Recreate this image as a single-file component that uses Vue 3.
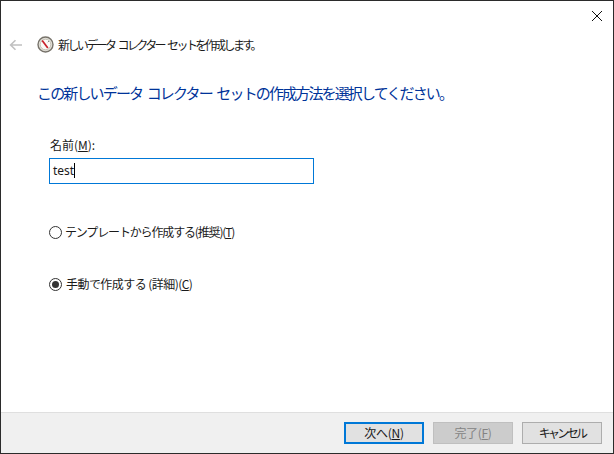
<script setup>
</script>

<template>
  <div class="win">
    <div class="titlebar">
      <svg class="close" width="12" height="12" viewBox="0 0 12 12"><path d="M1 1L11 11M11 1L1 11" stroke="#111" stroke-width="1" fill="none"/></svg>
    </div>
    <div class="nav">
      <svg class="back" width="14" height="12" viewBox="0 0 14 12"><path d="M13 6H2M6.5 1.2L1.6 6l4.9 4.8" stroke="#c0c0c0" stroke-width="1.6" fill="none"/></svg>
      <svg class="gauge" width="17" height="17" viewBox="0 0 17 17">
        <circle cx="8.5" cy="8.5" r="7.5" fill="#e4e1d9" stroke="#77736b" stroke-width="1.4"/>
        <circle cx="8.5" cy="8.5" r="5.3" fill="#fbfaf7" stroke="#b9b5aa" stroke-width="0.8"/>
        <path d="M5.2 4.4L10.8 12" stroke="#c8202a" stroke-width="1.7"/>
        <path d="M12 5l-1.2 1.2" stroke="#8a8a8a" stroke-width="1"/>
      </svg>
      <span class="navtext">新しいデータ コレクター セットを作成します。</span>
    </div>
    <h1 class="heading">この新しいデータ コレクター セットの作成方法を選択してください。</h1>
    <div class="content">
      <label class="namelabel">名前(<u>M</u>):</label>
      <div class="input"><span>test</span><i class="caret"></i></div>
      <div class="radio first"><span class="dot"></span><span>テンプレートから作成する(推奨)(<u>T</u>)</span></div>
      <div class="radio second"><span class="dot on"></span><span>手動で作成する (詳細)(<u>C</u>)</span></div>
    </div>
    <div class="footer">
      <button class="btn primary">次へ(<u>N</u>)</button>
      <button class="btn disabled">完了(<u>F</u>)</button>
      <button class="btn cancel">キャンセル</button>
    </div>
  </div>
</template>

<style scoped>
.win {
  width: 614px;
  height: 454px;
  box-sizing: border-box;
  border: 1px solid #2b2b2b;
  background: #fff;
  display: flex;
  flex-direction: column;
  font-family: "Noto Sans CJK JP", "Noto Sans", sans-serif;
  font-size: 12px;
  color: #1a1a1a;
}
.titlebar {
  height: 29px;
  display: flex;
  justify-content: flex-end;
  align-items: flex-start;
  padding: 9px 10px 0 0;
  box-sizing: border-box;
}
.nav {
  height: 29px;
  display: flex;
  align-items: center;
  padding-left: 8px;
  flex: none;
}
.back { margin-right: 14px; }
.gauge { margin-right: 4px; }
.navtext { line-height: 16px; letter-spacing: -2.6px; word-spacing: 3px; white-space: nowrap; font-size: 12px; }
.heading {
  margin: 22px 0 0 36px;
  font-size: 15px;
  font-weight: 400;
  line-height: 24px;
  color: #003399;
  letter-spacing: -1.85px;
  word-spacing: 3px;
  white-space: nowrap;
}
.content {
  flex: 1;
  padding-left: 48px;
  display: flex;
  flex-direction: column;
  align-items: flex-start;
}
.namelabel { margin: 32px 0 0 1px; line-height: 16px; letter-spacing: 0; }
.input {
  margin-top: 5px;
  width: 265px;
  height: 26px;
  box-sizing: border-box;
  border: 1px solid #0078d7;
  display: flex;
  align-items: center;
  padding: 0 0 2px 3px;
  font-family: "Noto Sans", sans-serif;
}
.caret { width: 1px; height: 15px; background: #000; }
.radio {
  display: flex;
  align-items: center;
  line-height: 16px;
  white-space: nowrap;
}
.radio.first { margin-top: 40px; letter-spacing: -1.15px; }
.radio.second { margin-top: 36px; letter-spacing: -0.55px; }
.dot {
  width: 13px;
  height: 13px;
  box-sizing: border-box;
  border: 1px solid #333;
  border-radius: 50%;
  margin-right: 3px;
  flex: none;
  position: relative;
}
.radio.second .dot { margin-right: 4px; }
.dot.on::after {
  content: "";
  position: absolute;
  left: 2px;
  top: 2px;
  width: 7px;
  height: 7px;
  border-radius: 50%;
  background: #333;
}
.footer {
  height: 41px;
  box-sizing: border-box;
  flex: none;
  background: #f0f0f0;
  border-top: 1px solid #dfdfdf;
  display: flex;
  justify-content: flex-end;
  align-items: flex-start;
  gap: 9px;
  padding: 9px 11px 0 0;
}
.btn {
  width: 80px;
  height: 22px;
  box-sizing: border-box;
  border: 1px solid #adadad;
  background: #e1e1e1;
  font: inherit;
  color: #1a1a1a;
  line-height: 18px;
  padding: 0;
  letter-spacing: -0.3px;
}
.btn.primary { border: 2px solid #0078d7; }
.btn.disabled { background: #cccccc; border-color: #bfbfbf; color: #838383; }
.btn.cancel { letter-spacing: -2.7px; }
</style>
